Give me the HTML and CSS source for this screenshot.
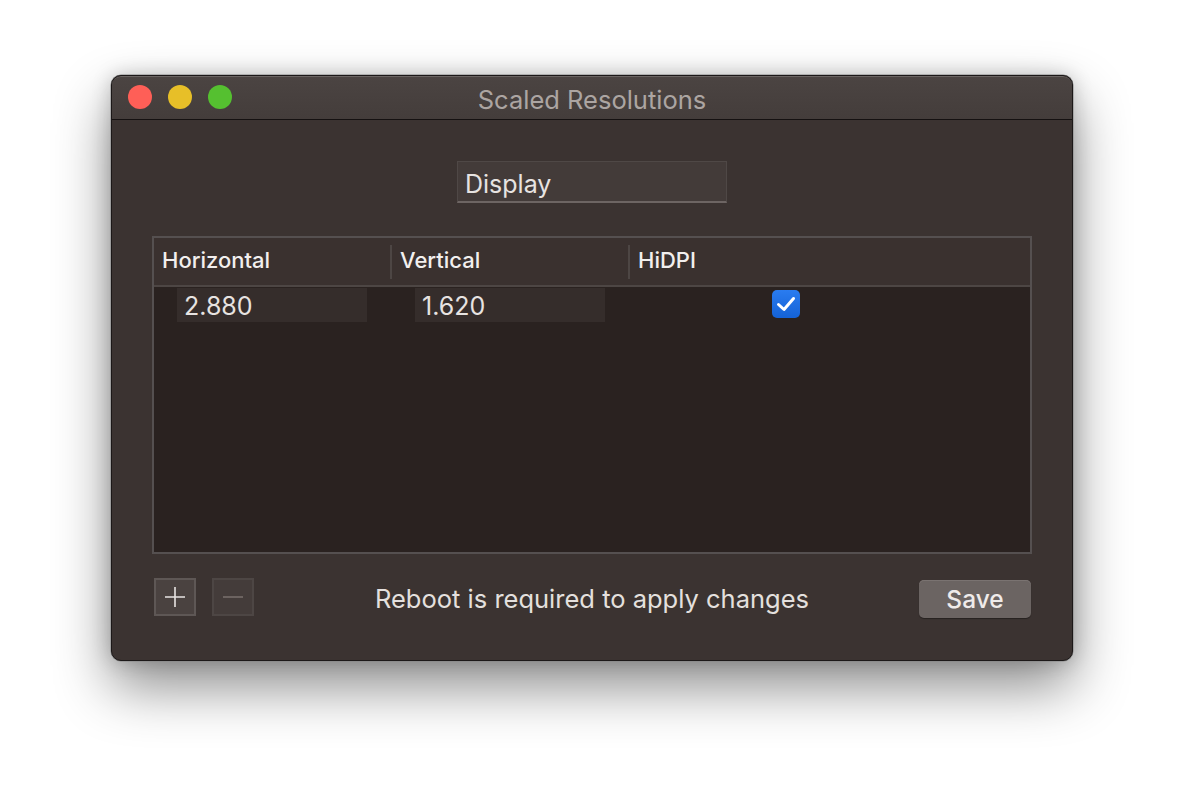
FILE: index.html
```html
<!DOCTYPE html>
<html>
<head>
<meta charset="utf-8">
<link rel="stylesheet" href="styles.css">
</head>
<body>
<div class="window">
  <div class="titlebar">
    <div class="lights">
      <span class="light red"></span>
      <span class="light yellow"></span>
      <span class="light green"></span>
    </div>
    <div class="title">Scaled Resolutions</div>
  </div>
  <div class="content">
    <div class="display-row">
      <div class="display-field">Display</div>
    </div>
    <div class="table">
      <div class="thead">
        <div class="th c1">Horizontal</div>
        <div class="th c2">Vertical</div>
        <div class="th c3">HiDPI</div>
      </div>
      <div class="tbody">
        <div class="tr">
          <div class="td c1"><div class="cell-field">2.880</div></div>
          <div class="td c2"><div class="cell-field">1.620</div></div>
          <div class="td c3">
            <span class="checkbox">
              <svg width="28" height="28" viewBox="0 0 28 28"><path d="M6.5 14.5 L12 19.5 L21.5 8.5" fill="none" stroke="#fff" stroke-width="3" stroke-linecap="round" stroke-linejoin="round"/></svg>
            </span>
          </div>
        </div>
      </div>
    </div>
    <div class="footer">
      <div class="pm">
        <span class="sq plus"><svg width="22" height="22" viewBox="0 0 22 22"><path d="M11 1V21M1 11H21" stroke="#e8e4e2" stroke-width="1.6"/></svg></span>
        <span class="sq minus"><svg width="22" height="22" viewBox="0 0 22 22"><path d="M1 11H21" stroke="#7a716e" stroke-width="1.6"/></svg></span>
      </div>
      <div class="msg">Reboot is required to apply changes</div>
      <button class="save">Save</button>
    </div>
  </div>
</div>
</body>
</html>
```
FILE: styles.css
```css
* { box-sizing: border-box; }
html, body { margin: 0; padding: 0; }
body {
  width: 1184px;
  height: 808px;
  background: #ffffff;
  font-family: Inter, "Helvetica Neue", "Liberation Sans", sans-serif;
  padding: 75px 0 0 111px;
}
.window {
  width: 962px;
  height: 586px;
  border-radius: 10px;
  background: #3b3331;
  border: 1px solid #1c1818;
  box-shadow: 0 0 0 0.5px #888, 0 26px 55px rgba(0,0,0,0.45), 0 0 20px rgba(0,0,0,0.2);
  overflow: hidden;
  display: flex;
  flex-direction: column;
}
.titlebar {
  height: 44px;
  flex: none;
  background: linear-gradient(#4b4442, #443d3b);
  border-bottom: 1px solid #151111;
  border-top: 1px solid #6a6462;
  border-radius: 9px 9px 0 0;
  position: relative;
  display: flex;
  align-items: center;
}
.lights {
  display: flex;
  gap: 16px;
  padding-left: 16px;
  margin-top: -2px;
}
.light {
  width: 24px;
  height: 24px;
  border-radius: 50%;
  display: block;
}
.red { background: #fe5f57; }
.yellow { background: #e7bf28; }
.green { background: #55c030; }
.title {
  position: absolute;
  left: 0; right: 0;
  top: 7px;
  text-align: center;
  color: #aca5a2;
  font-size: 25.5px;
}
.content {
  flex: 1;
  padding: 41px 40px 0 40px;
  display: flex;
  flex-direction: column;
}
.display-row {
  display: flex;
  justify-content: center;
}
.display-field {
  width: 270px;
  height: 42px;
  background: #433b39;
  border: 1px solid #4f4846;
  border-bottom: 2px solid #6d6563;
  color: #e7e3e1;
  font-size: 25px;
  padding: 7px 0 0 7px;
}
.table {
  margin-top: 33px;
  height: 318px;
  border: 2px solid #555050;
  background: #2a2220;
  display: flex;
  flex-direction: column;
}
.thead {
  height: 49px;
  flex: none;
  background: #3a312f;
  border-bottom: 2px solid #4d4644;
  display: flex;
  align-items: center;
}
.th {
  color: #f2efee;
  font-size: 22px;
  font-weight: 500;
  height: 34px;
  padding: 2px 0 0 8px;
}
.c1 { width: 236px; }
.c2 { width: 238px; }
.c3 { flex: 1; }
.th.c2, .th.c3 { border-left: 2px solid #4d4644; }
.tbody { flex: 1; }
.tr {
  display: flex;
  height: 40px;
  align-items: flex-start;
  padding-top: 1px;
}
.td.c1 { padding-left: 23px; }
.td.c2 { padding-left: 25px; }
.cell-field {
  width: 190px;
  height: 34px;
  background: #352d2b;
  color: #e7e3e1;
  font-size: 25px;
  padding: 3px 0 0 7px;
}
.td.c3 {
  display: flex;
  padding-left: 144px;
}
.checkbox {
  width: 28px;
  height: 28px;
  border-radius: 5px;
  background: linear-gradient(#2a7cf0, #1462d6);
  display: block;
  margin-top: 2px;
}
.checkbox svg { display: block; }
.footer {
  display: grid;
  grid-template-columns: 1fr auto 1fr;
  align-items: center;
  margin-top: 24px;
  height: 42px;
}
.pm {
  display: flex;
  gap: 16px;
  padding-left: 2px;
  margin-top: -4px;
}
.sq {
  width: 42px;
  height: 38px;
  display: flex;
  align-items: center;
  justify-content: center;
}
.plus { background: #4a4240; border: 2px solid #5e5755; }
.minus { background: #443c3a; border: 2px solid #4d4644; }
.msg {
  text-align: center;
  color: #e4e0de;
  font-size: 25.5px;
  margin-top: -2px;
}
.save {
  justify-self: end;
  width: 112px;
  height: 38px;
  margin-right: 1px;
  border: none;
  border-radius: 5px;
  background: #6b6462;
  color: #efebea;
  font-family: inherit;
  font-size: 24.5px;
  font-weight: 500;
  box-shadow: 0 1px 1px rgba(0,0,0,0.35), inset 0 1px 0 #7a7371;
  padding: 0;
}
```
